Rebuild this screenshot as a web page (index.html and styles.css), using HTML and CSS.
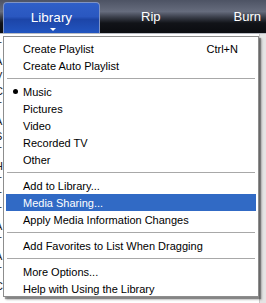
FILE: index.html
```html
<!DOCTYPE html>
<html lang="en">
<head>
    <meta charset="UTF-8">
    <title>Library menu</title>
    <link rel="stylesheet" href="styles.css">
</head>
<body>
    <div class="topbar">
        <div class="tab tab-active">
            <span class="tab-label">Library</span>
            <span class="tab-arrow"></span>
        </div>
        <div class="tab tab-rip">Rip</div>
        <div class="tab tab-burn">Burn</div>
    </div>

    <div class="stage">
        <div class="backlist">
            <div>T</div><div>A</div><div>V</div><div>C</div><div>T</div>
            <div>A</div><div>S</div><div>T</div><div>H</div><div>T</div>
            <div>T</div><div>T</div><div>A</div><div>T</div><div>A</div>
            <div>T</div><div>C</div>
        </div>
        <div class="rightstrip"></div>

        <div class="menu">
            <div class="item"><span>Create Playlist</span><span class="shortcut">Ctrl+N</span></div>
            <div class="item"><span>Create Auto Playlist</span></div>
            <div class="sep"></div>
            <div class="item checked"><span>Music</span></div>
            <div class="item"><span>Pictures</span></div>
            <div class="item"><span>Video</span></div>
            <div class="item"><span>Recorded TV</span></div>
            <div class="item"><span>Other</span></div>
            <div class="sep"></div>
            <div class="item"><span>Add to Library...</span></div>
            <div class="item active"><span>Media Sharing...</span></div>
            <div class="item"><span>Apply Media Information Changes</span></div>
            <div class="sep"></div>
            <div class="item"><span>Add Favorites to List When Dragging</span></div>
            <div class="sep"></div>
            <div class="item"><span>More Options...</span></div>
            <div class="item"><span>Help with Using the Library</span></div>
        </div>
    </div>
</body>
</html>
```

FILE: styles.css
```css
* {
    margin: 0;
    padding: 0;
    box-sizing: border-box;
}

body {
    width: 266px;
    height: 303px;
    overflow: hidden;
    background: #ffffff;
    font-family: 'Liberation Sans', Arial, sans-serif;
}

.topbar {
    height: 34px;
    display: flex;
    align-items: flex-end;
    background: linear-gradient(#4d5364 0%, #666c7d 35%, #3a3e4a 52%, #111318 70%, #0b0c10 100%);
    border-bottom: 1px solid #b9bcc4;
}

.tab {
    color: #ffffff;
    font-size: 13px;
    height: 31px;
    display: flex;
    align-items: center;
    justify-content: center;
    padding-bottom: 2px;
}

.tab-active {
    position: relative;
    width: 97px;
    margin-left: 3px;
    border: 1px solid #7f93c4;
    border-bottom: none;
    border-radius: 4px 4px 0 0;
    background: linear-gradient(#2f5fc8 0%, #2a57c0 45%, #1c45a8 55%, #2255c0 100%);
    font-size: 13.5px;
}

.tab-arrow {
    position: absolute;
    left: 46px;
    bottom: 2px;
    width: 0;
    height: 0;
    border-left: 3px solid transparent;
    border-right: 3px solid transparent;
    border-top: 3px solid #ffffff;
}

.tab-rip {
    margin-left: 41px;
}

.tab-burn {
    margin-left: auto;
    margin-right: 5px;
}

.stage {
    position: relative;
    height: 269px;
}

.backlist {
    position: absolute;
    left: -5px;
    top: 5px;
    font-size: 11px;
    color: #222;
    line-height: 15px;
}

.rightstrip {
    position: absolute;
    right: 0;
    top: 0;
    width: 7px;
    height: 100%;
    background: #e4e4e4;
    border-left: 1px solid #c8c8c8;
}

.menu {
    position: absolute;
    left: 3px;
    top: 2px;
    width: 256px;
    height: 261px;
    background: #ffffff;
    border: 1px solid #8d8d8d;
    padding: 3px 2px 2px;
    box-shadow: 2px 2px 1px rgba(0, 0, 0, 0.35), 3px 3px 2px rgba(0, 0, 0, 0.2);
    font-size: 11px;
    color: #000;
}

.item {
    position: relative;
    height: 17px;
    display: flex;
    align-items: center;
    justify-content: space-between;
    padding: 0 18px 0 17px;
}

.item.active {
    background: #316ac5;
    color: #ffffff;
}

.checked::before {
    content: '';
    position: absolute;
    left: 7px;
    top: 6px;
    width: 5px;
    height: 5px;
    border-radius: 50%;
    background: #000;
}

.sep {
    height: 9px;
    display: flex;
    align-items: center;
    padding: 0 1px;
}

.sep::after {
    content: '';
    flex: 1;
    height: 1px;
    background: #a8a8a8;
}
```
